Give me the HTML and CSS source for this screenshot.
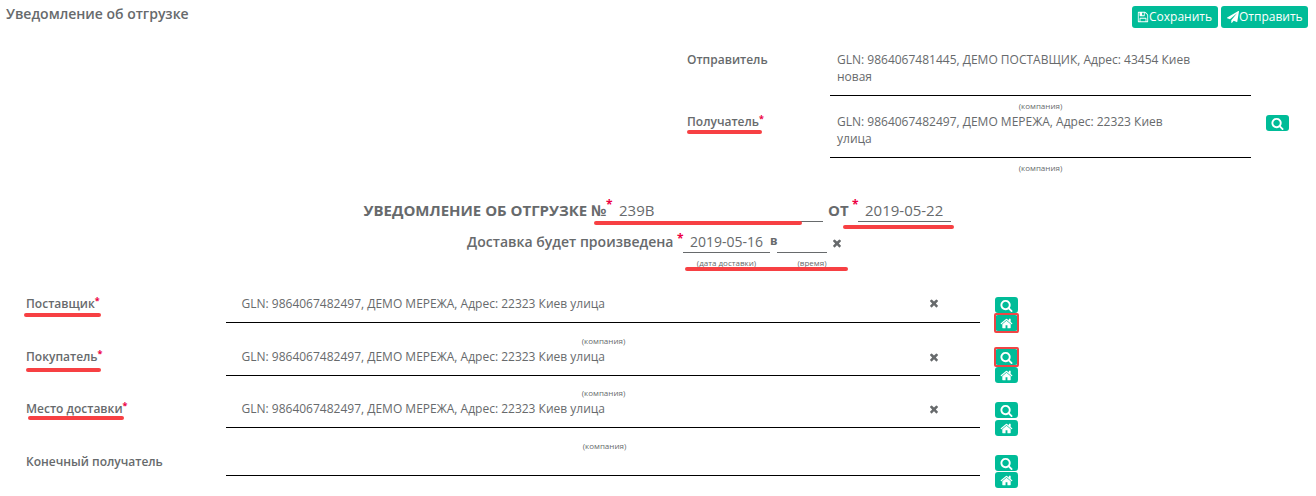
FILE: index.html
```html
<!DOCTYPE html>
<html lang="ru">
<head>
<meta charset="utf-8">
<title>Уведомление об отгрузке</title>
<link rel="stylesheet" href="styles.css">
</head>
<body>
<svg class="sprite" aria-hidden="true">
  <symbol id="search" viewBox="0 0 1792 1792"><path d="M1216 832q0-185-131.5-316.5t-316.5-131.5-316.5 131.5-131.5 316.5 131.5 316.5 316.5 131.5 316.5-131.5 131.5-316.5zm512 832q0 52-38 90t-90 38q-54 0-90-38l-343-342q-179 124-399 124-143 0-273.5-55.5t-225-150-150-225-55.5-273.5 55.5-273.5 150-225 225-150 273.5-55.5 273.5 55.5 225 150 150 225 55.5 273.5q0 220-124 399l343 343q37 37 37 90z"/></symbol>
  <symbol id="home" viewBox="0 0 1792 1792"><path d="M1472 992v480q0 26-19 45t-45 19h-384v-384h-256v384h-384q-26 0-45-19t-19-45v-480q0-1 .5-3t.5-3l575-474 575 474q1 2 1 6zm223-69l-62 74q-8 9-21 11h-3q-13 0-21-7l-692-577-692 577q-12 8-24 7-13-2-21-11l-62-74q-8-10-7-23.500t11-21.500l719-599q32-26 76-26t76 26l244 204v-195q0-14 9-23t23-9h192q14 0 23 9t9 23v408l219 182q10 8 11 21.500t-7 23.500z"/></symbol>
  <symbol id="times" viewBox="0 0 1792 1792"><path d="M1490 1322q0 40-28 68l-136 136q-28 28-68 28t-68-28l-294-294-294 294q-28 28-68 28t-68-28l-136-136q-28-28-28-68t28-68l294-294-294-294q-28-28-28-68t28-68l136-136q28-28 68-28t68 28l294 294 294-294q28-28 68-28t68 28l136 136q28 28 28 68t-28 68l-294 294 294 294q28 28 28 68z"/></symbol>
  <symbol id="plane" viewBox="0 0 1792 1792"><path d="M1764 11q33 24 27 64l-256 1536q-5 29-32 45-14 8-31 8-11 0-24-5l-453-185-242 295q-18 23-49 23-13 0-22-4-19-7-30.500-23.500t-11.500-36.500v-349l864-1059-1069 925-395-162q-37-14-40-55-2-40 32-59l1664-960q15-9 32-9 20 0 36 11z"/></symbol>
  <symbol id="floppy" viewBox="0 0 1792 1792"><path d="M512 1536h768v-384h-768v384zm896 0h128v-896q0-14-10-38.500t-20-34.500l-281-281q-10-10-34-20t-39-10v416q0 40-28 68t-68 28h-576q-40 0-68-28t-28-68v-416h-128v1280h128v-416q0-40 28-68t68-28h832q40 0 68 28t28 68v416zm-384-928v-320q0-13-9.500-22.500t-22.500-9.500h-192q-13 0-22.500 9.500t-9.500 22.500v320q0 13 9.500 22.500t22.500 9.500h192q13 0 22.500-9.500t9.500-22.500zm640 32v928q0 40-28 68t-68 28h-1344q-40 0-68-28t-28-68v-1344q0-40 28-68t68-28h928q40 0 88 20t76 48l280 280q28 28 48 76t20 88z"/></symbol>
</svg>

<header class="topbar">
  <h1 class="title">Уведомление об отгрузке</h1>
  <div class="actions">
    <button class="btn save"><svg><use href="#floppy"/></svg><span>Сохранить</span></button>
    <button class="btn send"><svg><use href="#plane"/></svg><span>Отправить</span></button>
  </div>
</header>

<section class="parties">
  <div class="party">
    <div class="label"><span>Отправитель</span></div>
    <div><div class="value">GLN: 9864067481445, ДЕМО ПОСТАВЩИК, Адрес: 43454 Киев<br>новая</div><div class="caption">(компания)</div></div>
  </div>
  <div class="party">
    <div class="label"><span>Получатель</span><i class="req">*</i><b class="mark m-receiver"></b></div>
    <div><div class="value">GLN: 9864067482497, ДЕМО МЕРЕЖА, Адрес: 22323 Киев<br>улица</div><div class="caption">(компания)</div></div>
    <button class="mini"><svg><use href="#search"/></svg></button>
  </div>
</section>

<section class="document">
  <div class="doc-number">
    <strong class="doc-title">УВЕДОМЛЕНИЕ ОБ ОТГРУЗКЕ №</strong><i class="req">*</i>
    <span class="input number">239В</span><strong class="from">ОТ</strong><i class="req">*</i>
    <span class="input date">2019-05-22</span>
    <b class="mark m-number"></b><b class="mark m-date"></b>
  </div>
  <div class="delivery">
    <span class="delivery-title">Доставка будет произведена</span><i class="req">*</i>
    <div class="slot day"><span class="input">2019-05-16</span><span class="caption">(дата доставки)</span></div>
    <span class="at">в</span>
    <div class="slot time"><span class="input"></span><span class="caption">(время)</span></div>
    <svg class="clear"><use href="#times"/></svg>
    <b class="mark m-delivery"></b>
  </div>
</section>

<section class="rows">
  <div class="row supplier">
    <div class="label"><span>Поставщик</span><i class="req">*</i><b class="mark m-supplier"></b></div>
    <div><div class="value"><span>GLN: 9864067482497, ДЕМО МЕРЕЖА, Адрес: 22323 Киев улица</span><svg class="clear"><use href="#times"/></svg></div><div class="caption">(компания)</div></div>
    <div class="tools"><button class="mini"><svg><use href="#search"/></svg></button><button class="mini boxed"><svg><use href="#home"/></svg></button></div>
  </div>
  <div class="row buyer">
    <div class="label"><span>Покупатель</span><i class="req">*</i><b class="mark m-buyer"></b></div>
    <div><div class="value"><span>GLN: 9864067482497, ДЕМО МЕРЕЖА, Адрес: 22323 Киев улица</span><svg class="clear"><use href="#times"/></svg></div><div class="caption">(компания)</div></div>
    <div class="tools"><button class="mini boxed"><svg><use href="#search"/></svg></button><button class="mini"><svg><use href="#home"/></svg></button></div>
  </div>
  <div class="row place">
    <div class="label"><span>Место доставки</span><i class="req">*</i><b class="mark m-place"></b></div>
    <div><div class="value"><span>GLN: 9864067482497, ДЕМО МЕРЕЖА, Адрес: 22323 Киев улица</span><svg class="clear"><use href="#times"/></svg></div><div class="caption">(компания)</div></div>
    <div class="tools"><button class="mini"><svg><use href="#search"/></svg></button><button class="mini"><svg><use href="#home"/></svg></button></div>
  </div>
  <div class="row final">
    <div class="label"><span>Конечный получатель</span></div>
    <div><div class="value"></div></div>
    <div class="tools"><button class="mini"><svg><use href="#search"/></svg></button><button class="mini"><svg><use href="#home"/></svg></button></div>
  </div>
</section>
</body>
</html>
```
FILE: styles.css
```css
* { box-sizing: border-box; }
body {
  margin: 0;
  height: 496px;
  overflow: hidden;
  background: #fff;
  color: #676a6c;
  font: 12px/17px "Open Sans", "Noto Sans", sans-serif;
}
.sprite { display: none; }
svg { fill: currentColor; flex: none; }
button { border: 0; padding: 0; font: inherit; color: #fff; background: #00bc98; border-radius: 3px; }

.topbar { display: flex; justify-content: space-between; height: 51px; padding: 6px 8px 0 6px; }
.title { margin: 0; font-size: 14px; font-weight: 600; line-height: 15px; letter-spacing: -0.01px; }
.actions { display: flex; gap: 3px; }
.btn { display: flex; align-items: center; height: 22px; padding: 0 0 0 5px; font-size: 12px; line-height: 20px; white-space: nowrap; }
.btn svg { width: 12px; height: 12px; }
.btn span { margin-top: -1px; }
.save { width: 86px; }
.send { width: 87px; padding-left: 6px; }

.label { position: relative; display: flex; align-items: flex-start; font-weight: 600; white-space: nowrap; }
.req { color: #ed0043; font-style: normal; font-weight: 700; font-size: 12px; line-height: 11px; }
.label .req { font-size: 9px; line-height: 11px; }
.mark { position: absolute; height: 4px; border-radius: 2px; background: #f74043; }
.caption { font-size: 8px; line-height: 10px; text-align: center; white-space: nowrap; }

.party { display: grid; grid-template-columns: 143px 421px 23px; column-gap: 0; height: 62px; padding-left: 687px; box-sizing: content-box; }
.party .value { height: 45px; padding-left: 7px; border-bottom: 1px solid #000; white-space: nowrap; }
.party .caption { margin-top: 5px; }
.party .mini { margin: 2px 0 0 15px; }
.mini { display: flex; align-items: center; justify-content: center; width: 23px; height: 16px; }
.mini svg { width: 13px; height: 13px; }

.document { height: 118px; padding-top: 24px; }
.doc-number { position: relative; display: flex; height: 34px; padding-left: 363.5px; font-size: 15px; line-height: 22px; white-space: nowrap; }
.doc-number .req, .delivery .req { width: 6px; }
.doc-title { width: 242.5px; }
.doc-number .input { height: 23px; border-bottom: 1px solid #676a6c; padding-left: 7px; }
.doc-number .number { width: 212px; margin-left: -1px; padding-left: 8px; }
.from { width: 24px; margin-left: 5px; }
.doc-number .date { width: 93px; }
.delivery { position: relative; display: flex; height: 40px; padding-left: 467px; font-size: 14px; line-height: 18px; white-space: nowrap; }
.delivery-title { width: 210px; font-weight: 600; letter-spacing: 0.02px; }
.slot { display: flex; flex-direction: column; }
.slot .input { height: 20px; border-bottom: 1px solid #676a6c; padding-left: 7px; }
.slot .caption { margin-top: 5px; }
.day { width: 87px; }
.at { width: 7px; font-size: 12px; line-height: 15px; font-weight: 700; }
.time { width: 50px; }
.time .caption { padding-left: 20px; }
.clear { width: 12px; height: 12px; }
.delivery .clear { margin: 4px 0 0 4px; }

.rows { padding-top: 1px; }
.row { display: grid; grid-template-columns: 200px 754px 23px; padding-left: 26px; height: 53px; }
.row .label { padding-top: 1px; }
.row .value { display: flex; justify-content: space-between; height: 29px; padding: 1px 40px 0 15.5px; border-bottom: 1px solid #000; }
.row .clear { margin-top: 3px; }
.supplier .clear { margin-top: 2px; }
.row .caption { margin-top: 13px; padding-left: 1px; }
.tools { display: flex; flex-direction: column; gap: 2px; padding: 3px 0 0 15px; }
.buyer { height: 52px; }
.buyer .caption { margin-top: 12px; }
.buyer .tools { padding-top: 2px; gap: 2px; }
.row.place .caption { margin-top: 13px; padding-left: 3px; }
.final { height: 44px; }
.final .tools { gap: 1px; }
.final .value { height: 24px; }
.boxed { position: relative; }
.boxed::after { content: ""; position: absolute; inset: -2px -1px; border: 2.5px solid #ef4545; border-radius: 2px; }

.m-receiver { left: 0; top: 17px; width: 75px; }
.m-number { left: 594px; top: 22px; width: 208px; }
.m-date { left: 843px; top: 26px; width: 111px; }
.m-delivery { left: 685px; top: 34px; width: 163px; }
.m-supplier { left: -2px; top: 19px; width: 77px; }
.m-buyer { left: 0; top: 21px; width: 75px; }
.m-place { left: 2px; top: 17px; width: 96px; }
```
